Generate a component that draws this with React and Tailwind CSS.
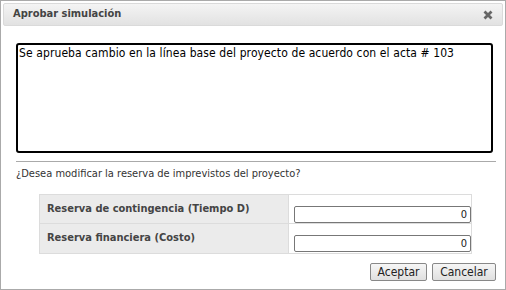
import React, { useState } from 'react';

const font = { fontFamily: '"DejaVu Sans Condensed", "DejaVu Sans", Tahoma, sans-serif' };

function CloseIcon() {
  return (
    <svg width="10" height="10" viewBox="0 0 10 10">
      <path d="M1.5 1.5 L8.5 8.5 M8.5 1.5 L1.5 8.5" stroke="#666" strokeWidth="2.8" strokeLinecap="butt" />
    </svg>
  );
}

function ReserveRow({ label, value, onChange, last }) {
  return (
    <div className={`flex h-[29px] ${last ? '' : 'border-b border-[#dcdcdc]'}`}>
      <div className="w-[252px] bg-[#ebebeb] border-r border-[#dcdcdc] flex items-center pl-[7px] text-[11px] font-bold text-[#444]">
        {label}
      </div>
      <div className="flex-1 pl-[5px] pt-[6px] pr-0">
        <input
          value={value}
          onChange={(e) => onChange(e.target.value)}
          className="w-[177px] h-[17px] border border-[#777] rounded-[2px] text-right pr-[3px] text-[11px] text-[#222] bg-white outline-none"
          style={font}
        />
      </div>
    </div>
  );
}

export default function App() {
  const [text, setText] = useState('Se aprueba cambio en la línea base del proyecto de acuerdo con el acta # 103');
  const [contingencia, setContingencia] = useState('0');
  const [financiera, setFinanciera] = useState('0');

  return (
    <div className="w-[506px] h-[290px] bg-white border border-[#aaa] p-[2px]" style={font}>
      <div className="h-[23px] flex items-center justify-between border border-[#dadada] rounded-[2px] bg-gradient-to-b from-[#f4f4f4] to-[#e2e2e2] pl-[9px] pr-[9px]">
        <span className="text-[11px] font-bold text-[#444]">Aprobar simulación</span>
        <CloseIcon />
      </div>

      <div className="pl-[13px] pt-[17px]">
        <textarea
          value={text}
          onChange={(e) => setText(e.target.value)}
          className="block w-[477px] h-[110px] border-2 border-black rounded-[3px] px-[1px] py-[1px] text-[12px] tracking-[0.1px] leading-[14px] text-black resize-none outline-none"
          style={font}
        />

        <div className="w-[480px] h-px bg-[#aaa] mt-[8px]" />

        <div className="mt-[5px] text-[11px] text-[#333] leading-[13px]">
          ¿Desea modificar la reserva de imprevistos del proyecto?
        </div>

        <div className="ml-[23px] mt-[14px] w-[433px] border border-[#dcdcdc]">
          <ReserveRow label="Reserva de contingencia (Tiempo D)" value={contingencia} onChange={setContingencia} />
          <ReserveRow label="Reserva financiera (Costo)" value={financiera} onChange={setFinanciera} last />
        </div>

        <div className="flex justify-end gap-[5px] w-[480px] mt-[9px]">
          <button className="w-[57px] h-[18px] border border-[#888] rounded-[2px] bg-gradient-to-b from-[#f6f6f6] to-[#e0e0e0] text-[12px] leading-[14px] text-[#222]">
            Aceptar
          </button>
          <button className="w-[64px] h-[18px] border border-[#888] rounded-[2px] bg-gradient-to-b from-[#f6f6f6] to-[#e0e0e0] text-[12px] leading-[14px] text-[#222]">
            Cancelar
          </button>
        </div>
      </div>
    </div>
  );
}
